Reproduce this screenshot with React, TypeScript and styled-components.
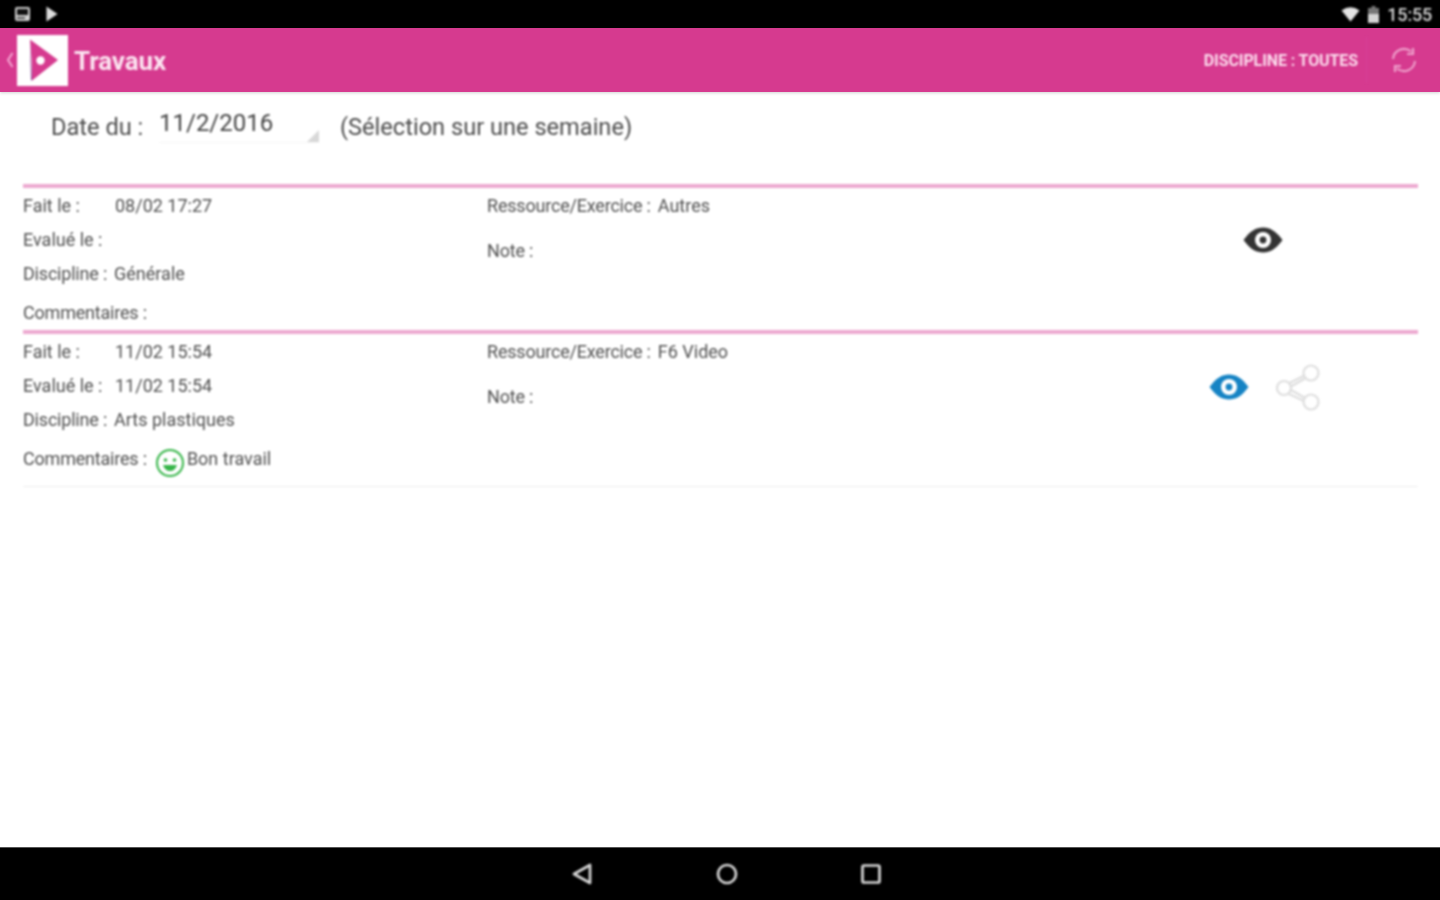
import styled, { createGlobalStyle, css } from 'styled-components';

const GlobalStyle = createGlobalStyle`
  html, body {
    margin: 0;
    padding: 0;
    background: #fff;
  }
  body {
    font-family: Roboto, 'Liberation Sans', sans-serif;
  }
`;

// the reference is an upscaled capture, so its contents are slightly soft
const soft = css`
  filter: blur(0.8px);
`;

const Page = styled.div`
  width: 1440px;
  height: 900px;
  display: flex;
  flex-direction: column;
  overflow: hidden;
`;

const StatusBar = styled.div`
  height: 28px;
  background: #000;
  display: flex;
  align-items: center;
  justify-content: space-between;
  padding: 0 8px 0 14px;
  color: #d6d6d6;
`;

const StatusGroup = styled.div<{ $gap: number }>`
  ${soft}
  display: flex;
  align-items: center;
  gap: ${({ $gap }) => $gap}px;
`;

const Clock = styled.span`
  font-size: 18px;
  font-weight: 500;
  letter-spacing: -0.2px;
`;

const AppBar = styled.header`
  height: 64px;
  background: #d63a8f;
  display: flex;
  align-items: center;
  box-shadow: 0 1px 3px rgba(0, 0, 0, 0.18);
  position: relative;
`;

const BackChevron = styled.div`
  ${soft}
  width: 17px;
  display: flex;
  justify-content: flex-end;
  padding-right: 3px;
  box-sizing: border-box;
`;

const LogoBox = styled.div`
  ${soft}
  width: 51px;
  height: 51px;
  background: #fff;
  display: flex;
  align-items: center;
  justify-content: center;
`;

const Title = styled.h1`
  ${soft}
  margin: 2px 0 0 6px;
  color: #fbe4f0;
  font-size: 26px;
  font-weight: 700;
  letter-spacing: -0.1px;
  flex: 1;
`;

const FilterLabel = styled.span`
  ${soft}
  color: #fbdcec;
  font-size: 16px;
  font-weight: 700;
  letter-spacing: -0.1px;
  padding-right: 8px;
`;

const RefreshSlot = styled.div`
  ${soft}
  width: 73px;
  height: 46px;
  border-left: 1px solid #d8419a;
  display: flex;
  align-items: center;
  justify-content: center;
`;

const Content = styled.main`
  ${soft}
  flex: 1;
  padding: 0 22px 0 23px;
  color: #505050;
`;

const DateRow = styled.div`
  height: 92px;
  display: flex;
  align-items: flex-start;
  font-size: 23.6px;
  color: #4c4c4c;
`;

const DateLabel = styled.span`
  margin: 21px 0 0 28px;
  width: 108px;
`;

const DatePicker = styled.div`
  position: relative;
  width: 160px;
  height: 36px;
  margin-top: 15px;
  box-sizing: border-box;
  border-bottom: 1px solid #f5f5f5;
  color: #444;
  font-size: 24px;
  line-height: 33px;
`;

const Corner = styled.span`
  position: absolute;
  right: 0;
  bottom: 0;
  width: 0;
  height: 0;
  border-style: solid;
  border-width: 0 0 12px 12px;
  border-color: transparent transparent #d8d8d8 transparent;
`;

const Hint = styled.span`
  margin-top: 21px;
  margin-left: 21px;
`;

const Entry = styled.section<{ $height: number; $last?: boolean }>`
  height: ${({ $height }) => $height}px;
  border-top: 4px solid #eda9d0;
  border-bottom: ${({ $last }) => ($last ? '1px solid #eeeeee' : 'none')};
  display: grid;
  grid-template-columns: 464px 1fr 231px;
  font-size: 18px;
`;

const Column = styled.div`
  padding-top: 8px;
  display: flex;
  flex-direction: column;
`;

const Line = styled.div<{ $height: number }>`
  height: ${({ $height }) => $height}px;
  display: flex;
  align-items: flex-start;
  line-height: 20px;
  white-space: nowrap;
`;

const Label = styled.span<{ $width?: number }>`
  width: ${({ $width }) => ($width ? `${$width}px` : 'auto')};
  margin-right: ${({ $width }) => ($width ? '0' : '7px')};
  letter-spacing: ${({ $width }) => ($width ? '0' : '-0.2px')};
`;

const CommentLine = styled(Line)`
  margin-top: 5px;
`;

const Smiley = styled.span`
  width: 30px;
  height: 30px;
  margin: -1px 2px 0 1px;
  display: inline-flex;
`;

const Actions = styled.div<{ $top: number }>`
  height: 48px;
  margin-top: ${({ $top }) => $top}px;
  display: flex;
  align-items: center;
`;

const ActionSlot = styled.span<{ $left: number }>`
  margin-left: ${({ $left }) => $left}px;
  display: inline-flex;
`;

const NavBar = styled.nav`
  height: 53px;
  background: #000;
  border-top: 1px solid #555;
  box-sizing: border-box;
  display: flex;
  align-items: center;
  justify-content: center;
  gap: 112px;
  padding-left: 14px;
`;

const NavIcon = styled.svg`
  ${soft}
  width: 32px;
  height: 28px;
  fill: none;
  stroke: #d8d8d8;
  stroke-width: 2.7;
`;

const Eye = ({ color }: { color: string }) => (
  <svg width="40" height="28" viewBox="0 1 40 28">
    <path d="M0.5 14 C7 5 13 1.5 20 1.5 S33 5 39.5 14 C33 23 27 26.5 20 26.5 S7 23 0.5 14Z" fill={color} />
    <circle cx="20" cy="14" r="8" fill="#fff" />
    <circle cx="20" cy="14" r="3.4" fill={color} />
  </svg>
);

const ShareIcon = () => (
  <svg width="48" height="48" viewBox="0 0 48 48" fill="none" stroke="#dedede" strokeWidth="2.2">
    <circle cx="10" cy="24" r="7" />
    <circle cx="37" cy="9" r="7.5" />
    <circle cx="37" cy="38" r="7.5" />
    <path d="M15.5 19 L30.5 11.5 M17 22.5 L31 14.5 M17 26 L31 34 M15 30 L30 37" />
  </svg>
);

const App = () => (
  <Page>
    <GlobalStyle />
    <StatusBar>
      <StatusGroup $gap={15}>
        <svg width="17" height="16" viewBox="0 0 17 16">
          <rect x="1" y="1" width="15" height="14" rx="2" fill="#cfcfcf" />
          <rect x="3" y="3" width="11" height="6" fill="#111" />
          <rect x="3" y="11" width="8" height="2" fill="#555" />
        </svg>
        <svg width="12" height="16" viewBox="0 0 12 16">
          <path d="M0.5 0.5 L11.5 8 L0.5 15.5Z" fill="#dcdcdc" />
        </svg>
      </StatusGroup>
      <StatusGroup $gap={8}>
        <svg width="19" height="16" viewBox="0 0 19 16">
          <path d="M0.5 4.5 Q9.5 -2 18.5 4.5 L9.5 15.5Z" fill="#e4e4e4" />
        </svg>
        <svg width="11" height="17" viewBox="0 0 11 17">
          <rect x="3.5" y="0" width="4" height="2" fill="#777" />
          <rect x="0" y="2" width="11" height="6" fill="#777" />
          <rect x="0" y="8" width="11" height="9" fill="#d4d4d4" />
        </svg>
        <Clock>15:55</Clock>
      </StatusGroup>
    </StatusBar>

    <AppBar>
      <BackChevron>
        <svg width="8" height="18" viewBox="0 0 8 18" fill="none" stroke="#f4a7d2" strokeWidth="2">
          <path d="M6.5 2 L2 9 L6.5 16" />
        </svg>
      </BackChevron>
      <LogoBox>
        <svg width="34" height="42" viewBox="0 0 34 42">
          <path d="M4 0.5 L32 21 L6 41.5 L5.5 21 Z" fill="#d63a8f" />
          <path d="M4 0.5 L6 41.5 L5 41 Z" fill="#6f3a8f" />
          <circle cx="14.5" cy="21.5" r="4.2" fill="#fff" />
        </svg>
      </LogoBox>
      <Title>Travaux</Title>
      <FilterLabel>DISCIPLINE : TOUTES</FilterLabel>
      <RefreshSlot>
        <svg width="28" height="28" viewBox="0 0 28 28" fill="none" stroke="#eea0cb" strokeWidth="2.2">
          <path d="M3 13 A11 11 0 0 1 21 5.5" />
          <path d="M25 15 A11 11 0 0 1 7 22.5" />
          <path d="M23 2 V8 H17" />
          <path d="M5 26 V20 H11" />
        </svg>
      </RefreshSlot>
    </AppBar>

    <Content>
      <DateRow>
        <DateLabel>Date du :</DateLabel>
        <DatePicker>
          11/2/2016
          <Corner />
        </DatePicker>
        <Hint>(Sélection sur une semaine)</Hint>
      </DateRow>

      <Entry $height={142}>
        <Column>
          <Line $height={34}><Label $width={92}>Fait le :</Label>08/02 17:27</Line>
          <Line $height={34}><Label $width={92}>Evalué le :</Label></Line>
          <Line $height={34}><Label>Discipline :</Label>Générale</Line>
          <CommentLine $height={30}><Label>Commentaires :</Label></CommentLine>
        </Column>
        <Column>
          <Line $height={45}><Label>Ressource/Exercice :</Label>Autres</Line>
          <Line $height={34}><Label>Note :</Label></Line>
        </Column>
        <Actions $top={29}>
          <ActionSlot $left={56}><Eye color="#333333" /></ActionSlot>
        </Actions>
      </Entry>

      <Entry $height={152} $last>
        <Column>
          <Line $height={34}><Label $width={92}>Fait le :</Label>11/02 15:54</Line>
          <Line $height={34}><Label $width={92}>Evalué le :</Label>11/02 15:54</Line>
          <Line $height={34}><Label>Discipline :</Label>Arts plastiques</Line>
          <CommentLine $height={30}>
            <Label>Commentaires :</Label>
            <Smiley>
              <svg width="30" height="30" viewBox="0 0 30 30">
                <circle cx="15" cy="15" r="13" fill="#fff" stroke="#35b548" strokeWidth="2" />
                <circle cx="10.5" cy="12" r="1.8" fill="#35b548" />
                <circle cx="19.5" cy="12" r="1.8" fill="#35b548" />
                <path d="M8 17 H22 Q20 23 15 23 T8 17Z" fill="#35b548" />
              </svg>
            </Smiley>
            Bon travail
          </CommentLine>
        </Column>
        <Column>
          <Line $height={45}><Label>Ressource/Exercice :</Label>F6 Video</Line>
          <Line $height={34}><Label>Note :</Label></Line>
        </Column>
        <Actions $top={30}>
          <ActionSlot $left={22}><Eye color="#1583c4" /></ActionSlot>
          <ActionSlot $left={25}><ShareIcon /></ActionSlot>
        </Actions>
      </Entry>
    </Content>

    <NavBar>
      <NavIcon viewBox="0 0 32 28">
        <path d="M23 5 V23 L7 14Z" strokeLinejoin="round" />
      </NavIcon>
      <NavIcon viewBox="0 0 32 28">
        <circle cx="16" cy="14" r="9" />
      </NavIcon>
      <NavIcon viewBox="0 0 32 28">
        <rect x="7.5" y="5.5" width="17" height="17" rx="1.5" />
      </NavIcon>
    </NavBar>
  </Page>
);

export default App;
